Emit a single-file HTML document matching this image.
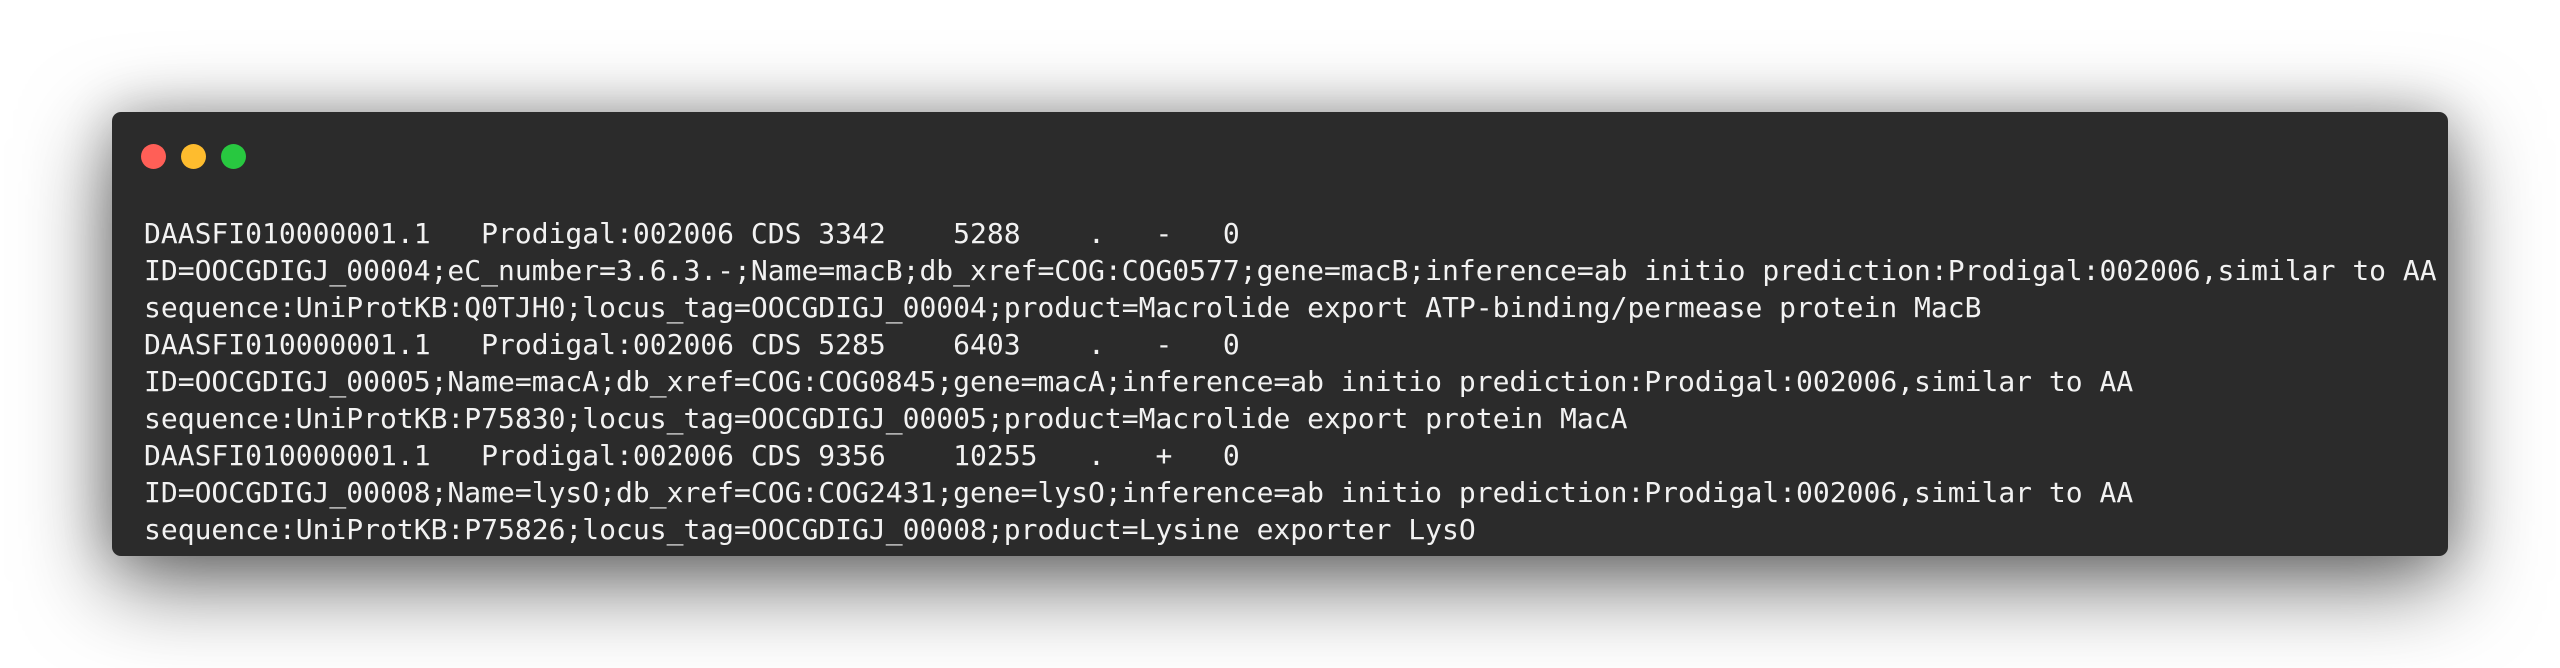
<!DOCTYPE html>
<html><head><meta charset="utf-8"><style>
html,body{margin:0;padding:0;width:2560px;height:668px;background:#fff;overflow:hidden}
.win{position:absolute;left:112px;top:112px;width:2336px;height:444px;background:#2b2b2b;border-radius:9px;box-shadow:0 26px 90px rgba(0,0,0,0.6),0 0 50px rgba(0,0,0,0.2)}
.dot{position:absolute;top:32px;width:25px;height:25px;border-radius:50%}
pre{position:absolute;left:32px;top:103px;margin:0;font-family:"DejaVu Sans Mono","Liberation Mono",monospace;font-size:28px;line-height:37px;color:#f2f2f2;white-space:pre}
</style></head><body>
<div class="win">
<div class="dot" style="left:29px;background:#ff5f57"></div>
<div class="dot" style="left:69px;background:#febc2e"></div>
<div class="dot" style="left:109px;background:#28c840"></div>
<pre>DAASFI010000001.1   Prodigal:002006 CDS 3342    5288    .   -   0
ID=OOCGDIGJ_00004;eC_number=3.6.3.-;Name=macB;db_xref=COG:COG0577;gene=macB;inference=ab initio prediction:Prodigal:002006,similar to AA
sequence:UniProtKB:Q0TJH0;locus_tag=OOCGDIGJ_00004;product=Macrolide export ATP-binding/permease protein MacB
DAASFI010000001.1   Prodigal:002006 CDS 5285    6403    .   -   0
ID=OOCGDIGJ_00005;Name=macA;db_xref=COG:COG0845;gene=macA;inference=ab initio prediction:Prodigal:002006,similar to AA
sequence:UniProtKB:P75830;locus_tag=OOCGDIGJ_00005;product=Macrolide export protein MacA
DAASFI010000001.1   Prodigal:002006 CDS 9356    10255   .   +   0
ID=OOCGDIGJ_00008;Name=lysO;db_xref=COG:COG2431;gene=lysO;inference=ab initio prediction:Prodigal:002006,similar to AA
sequence:UniProtKB:P75826;locus_tag=OOCGDIGJ_00008;product=Lysine exporter LysO</pre>
</div>
</body></html>
